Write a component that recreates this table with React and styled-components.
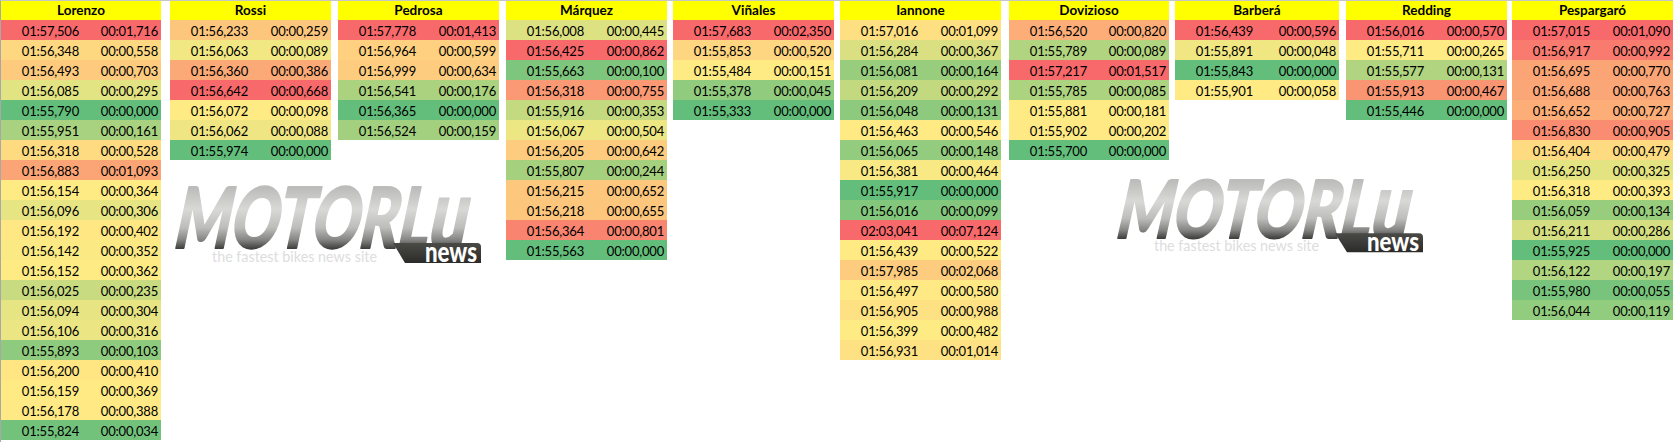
import React, { useId } from "react";
import styled, { createGlobalStyle } from "styled-components";

// Excel 3-colour scale: min green, 50th percentile yellow, max red
const GREEN = [99, 190, 123];
const YELLOW = [255, 235, 132];
const RED = [248, 105, 107];

const riders = [
  {
    name: "Lorenzo", gap: 0, w: 160,
    laps: `01:57,506 00:01,716
01:56,348 00:00,558
01:56,493 00:00,703
01:56,085 00:00,295
01:55,790 00:00,000
01:55,951 00:00,161
01:56,318 00:00,528
01:56,883 00:01,093
01:56,154 00:00,364
01:56,096 00:00,306
01:56,192 00:00,402
01:56,142 00:00,352
01:56,152 00:00,362
01:56,025 00:00,235
01:56,094 00:00,304
01:56,106 00:00,316
01:55,893 00:00,103
01:56,200 00:00,410
01:56,159 00:00,369
01:56,178 00:00,388
01:55,824 00:00,034`,
  },
  {
    name: "Rossi", gap: 9, w: 161, logo: { top: 25, left: 1, h: 82 },
    laps: `01:56,233 00:00,259
01:56,063 00:00,089
01:56,360 00:00,386
01:56,642 00:00,668
01:56,072 00:00,098
01:56,062 00:00,088
01:55,974 00:00,000`,
  },
  {
    name: "Pedrosa", gap: 7, w: 161,
    laps: `01:57,778 00:01,413
01:56,964 00:00,599
01:56,999 00:00,634
01:56,541 00:00,176
01:56,365 00:00,000
01:56,524 00:00,159`,
  },
  {
    name: "Márquez", gap: 7, w: 161, selected: true,
    laps: `01:56,008 00:00,445
01:56,425 00:00,862
01:55,663 00:00,100
01:56,318 00:00,755
01:55,916 00:00,353
01:56,067 00:00,504
01:56,205 00:00,642
01:55,807 00:00,244
01:56,215 00:00,652
01:56,218 00:00,655
01:56,364 00:00,801
01:55,563 00:00,000`,
  },
  {
    name: "Viñales", gap: 6, w: 161,
    laps: `01:57,683 00:02,350
01:55,853 00:00,520
01:55,484 00:00,151
01:55,378 00:00,045
01:55,333 00:00,000`,
  },
  {
    name: "Iannone", gap: 6, w: 161,
    laps: `01:57,016 00:01,099
01:56,284 00:00,367
01:56,081 00:00,164
01:56,209 00:00,292
01:56,048 00:00,131
01:56,463 00:00,546
01:56,065 00:00,148
01:56,381 00:00,464
01:55,917 00:00,000
01:56,016 00:00,099
02:03,041 00:07,124
01:56,439 00:00,522
01:57,985 00:02,068
01:56,497 00:00,580
01:56,905 00:00,988
01:56,399 00:00,482
01:56,931 00:01,014`,
  },
  {
    name: "Dovizioso", gap: 8, w: 160, logo: { top: 18, left: 104, h: 78 },
    laps: `01:56,520 00:00,820
01:55,789 00:00,089
01:57,217 00:01,517
01:55,785 00:00,085
01:55,881 00:00,181
01:55,902 00:00,202
01:55,700 00:00,000`,
  },
  {
    name: "Barberá", gap: 6, w: 164,
    laps: `01:56,439 00:00,596
01:55,891 00:00,048
01:55,843 00:00,000
01:55,901 00:00,058`,
  },
  {
    name: "Redding", gap: 7, w: 161,
    laps: `01:56,016 00:00,570
01:55,711 00:00,265
01:55,577 00:00,131
01:55,913 00:00,467
01:55,446 00:00,000`,
  },
  {
    name: "Pespargaró", gap: 5, w: 161,
    laps: `01:57,015 00:01,090
01:56,917 00:00,992
01:56,695 00:00,770
01:56,688 00:00,763
01:56,652 00:00,727
01:56,830 00:00,905
01:56,404 00:00,479
01:56,250 00:00,325
01:56,318 00:00,393
01:56,059 00:00,134
01:56,211 00:00,286
01:55,925 00:00,000
01:56,122 00:00,197
01:55,980 00:00,055
01:56,044 00:00,119`,
  },
];

const toSeconds = (s) => {
  const [m, rest] = s.split(":");
  return Number(m) * 60 + Number(rest.replace(",", "."));
};

const median = (values) => {
  const s = [...values].sort((a, b) => a - b);
  const k = (s.length - 1) / 2;
  return (s[Math.floor(k)] + s[Math.ceil(k)]) / 2;
};

const mix = (a, b, t) => a.map((v, i) => Math.round(v + (b[i] - v) * t));

function colourScale(values) {
  const min = Math.min(...values);
  const max = Math.max(...values);
  const mid = median(values);
  return values.map((v) => {
    const c =
      v <= mid
        ? mix(GREEN, YELLOW, mid === min ? 1 : (v - min) / (mid - min))
        : mix(YELLOW, RED, (v - mid) / (max - mid));
    return `rgb(${c.join(",")})`;
  });
}

const GlobalStyle = createGlobalStyle`
  html, body {
    margin: 0;
    padding: 0;
    background: #fff;
  }
  body {
    font-family: Lato, "Liberation Sans", sans-serif;
    color: #000;
  }
`;

const Sheet = styled.div`
  width: 1673px;
  height: 442px;
  box-sizing: border-box;
  border-top: 1px solid #c6c6c6;
  border-left: 1px solid #a8a8a8;
  display: flex;
  align-items: flex-start;
  overflow: hidden;
`;

const Column = styled.div`
  position: relative;
  flex: none;
  width: ${({ $w }) => $w}px;
  min-width: 0;
  margin-left: ${({ $gap }) => $gap}px;
  display: flex;
  flex-direction: column;

  ${({ $selected }) =>
    $selected &&
    `
    &::before {
      content: "";
      position: absolute;
      top: -1px;
      left: -3px;
      width: 74px;
      height: 1px;
      background: #217346;
    }
  `}
`;

const Header = styled.div`
  height: 19px;
  line-height: 19px;
  background: #ffff00;
  text-align: center;
  font-size: 13.5px;
  font-weight: 700;
`;

const Row = styled.div`
  display: grid;
  grid-template-columns: 80px 1fr;
  height: 20px;
  box-sizing: border-box;
  padding-top: 2px;
  background: ${({ $bg }) => $bg};
`;

const Cell = styled.span`
  text-align: right;
  padding-right: ${({ $pad }) => $pad}px;
  font-size: 13px;
  line-height: 18px;
  letter-spacing: -0.2px;
  white-space: nowrap;
`;

const LogoMark = styled.svg`
  display: block;
  flex: none;
  align-self: flex-start;
  overflow: visible;
  margin-top: ${({ $top }) => $top}px;
  margin-left: ${({ $left }) => $left}px;
  margin-right: -400px;
`;

function MotorluLogo({ top, left, h }) {
  const id = useId().replace(/:/g, "");
  return (
    <LogoMark
      $top={top}
      $left={left}
      width="312"
      height={h}
      viewBox="0 0 312 82"
      preserveAspectRatio="none"
    >
      <defs>
        <linearGradient id={`${id}m`} gradientUnits="userSpaceOnUse" x1="0" y1="3" x2="0" y2="64">
          <stop offset="0" stopColor="#bcbcba" />
          <stop offset="0.35" stopColor="#d8d8d6" />
          <stop offset="0.65" stopColor="#bdbdbb" />
          <stop offset="0.85" stopColor="#858583" />
          <stop offset="1" stopColor="#3c3c3a" />
        </linearGradient>
        <linearGradient id={`${id}b`} x1="0" y1="0" x2="0" y2="1">
          <stop offset="0" stopColor="#4a4a47" />
          <stop offset="1" stopColor="#2b2b29" />
        </linearGradient>
      </defs>
      <text
        x="41"
        y="77"
        textLength="165"
        lengthAdjust="spacingAndGlyphs"
        fontFamily="Lato, sans-serif"
        fontSize="16"
        fill="#dddddd"
      >
        the fastest bikes news site
      </text>
      <text
        transform="skewX(-12)"
        x="14"
        y="63"
        textLength="292"
        lengthAdjust="spacingAndGlyphs"
        fontFamily="Lato, sans-serif"
        fontWeight="900"
        fontSize="84"
        fill={`url(#${id}m)`}
        stroke={`url(#${id}m)`}
        strokeWidth="2"
        strokeLinejoin="round"
      >
        MOTORL<tspan fontSize="96">u</tspan>
      </text>
      <path d="M222 58H306Q310 58 310 62V78H234Z" fill={`url(#${id}b)`} />
      <text
        x="254"
        y="77"
        textLength="52"
        lengthAdjust="spacingAndGlyphs"
        fontFamily="Lato, sans-serif"
        fontWeight="900"
        fontSize="28"
        fill="#ffffff"
      >
        news
      </text>
    </LogoMark>
  );
}

function RiderColumn({ rider }) {
  const laps = rider.laps.split("\n").map((l) => l.trim().split(" "));
  const colours = colourScale(laps.map(([, gap]) => toSeconds(gap)));

  return (
    <Column $w={rider.w} $gap={rider.gap} $selected={rider.selected}>
      <Header>{rider.name}</Header>
      {laps.map(([time, gap], i) => (
        <Row key={i} $bg={colours[i]}>
          <Cell $pad={2}>{time}</Cell>
          <Cell $pad={3}>{gap}</Cell>
        </Row>
      ))}
      {rider.logo && <MotorluLogo {...rider.logo} />}
    </Column>
  );
}

export default function App() {
  return (
    <>
      <GlobalStyle />
      <Sheet>
        {riders.map((r) => (
          <RiderColumn key={r.name} rider={r} />
        ))}
      </Sheet>
    </>
  );
}
